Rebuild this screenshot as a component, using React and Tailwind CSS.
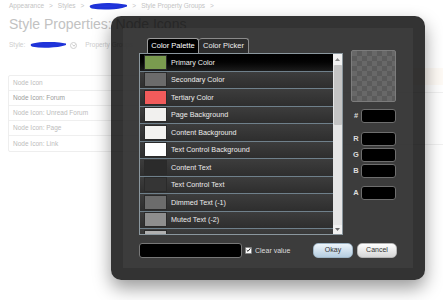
import React from "react";

function Scribble({ w = 38, h = 8 }) {
  return (
    <svg width={w} height={h} viewBox={`0 0 ${w} ${h}`} className="block">
      <path
        d={`M2 ${h / 2} C ${w * 0.25} ${h * 0.1}, ${w * 0.7} ${h * 0.1}, ${w - 2} ${h * 0.4} C ${w * 0.75} ${h * 0.8}, ${w * 0.3} ${h * 0.85}, 3 ${h * 0.6}`}
        fill="#2437e0"
        stroke="#1f33d8"
        strokeWidth="2.5"
        strokeLinecap="round"
      />
    </svg>
  );
}

const rows = [
  { name: "Primary Color", color: "#7a9b4f", active: true },
  { name: "Secondary Color", color: "#6b6b6b" },
  { name: "Tertiary Color", color: "#f25b5b" },
  { name: "Page Background", color: "#f1f0ee" },
  { name: "Content Background", color: "#f3f2f0" },
  { name: "Text Control Background", color: "#ffffff" },
  { name: "Content Text", color: "#2b2b2b" },
  { name: "Text Control Text", color: "#353535" },
  { name: "Dimmed Text (-1)", color: "#6c6c6c" },
  { name: "Muted Text (-2)", color: "#8e8e8e" },
  { name: "Faint Text (-3)", color: "#b0b0b0" },
];

const nodeRows = [
  { t: "Node Icon", c: "text-[#bcbcbc]" },
  { t: "Node Icon: Forum", c: "text-[#9c9c9c]" },
  { t: "Node Icon: Unread Forum", c: "text-[#bcbcbc]" },
  { t: "Node Icon: Page", c: "text-[#bcbcbc]" },
  { t: "Node Icon: Link", c: "text-[#bcbcbc]" },
];

function Field({ label, className = "" }) {
  return (
    <div className={`flex items-center h-[14px] ${className}`}>
      <span className="w-[10px] text-center text-[7.5px] font-bold text-[#dcdcdc] leading-none">
        {label}
      </span>
      <div className="w-[35px] h-[14px] bg-black border border-[#6e6e6e] rounded-[3px]" />
    </div>
  );
}

export default function App() {
  return (
    <div className="relative w-[443px] h-[300px] overflow-hidden bg-white font-['Liberation_Sans',Arial,sans-serif]">
      {/* Underlying page */}
      <div className="pl-[9px]">
        <div className="flex items-center gap-[5px] h-[12px] text-[6.5px] text-[#c4c4c4]">
          <span>Appearance</span>
          <span>&gt;</span>
          <span>Styles</span>
          <span>&gt;</span>
          <Scribble w={38} h={7} />
          <span>&gt;</span>
          <span>Style Property Groups</span>
          <span>&gt;</span>
        </div>
        <div className="mt-[4px] h-[16px] text-[14px] leading-[16px] text-[#c2c2c2] whitespace-nowrap">
          Style Properties: Node Icons
        </div>
        <div className="mt-[7px] flex items-center h-[12px] text-[6.5px] text-[#cdcdcd]">
          <span>Style:</span>
          <span className="ml-[5px]">
            <Scribble w={36} h={6} />
          </span>
          <span className="ml-[4px] w-[7px] h-[7px] rounded-full border border-[#cfcfcf] flex items-center justify-center">
            <svg width="4" height="3" viewBox="0 0 4 3">
              <path d="M0.5 0.5 L2 2.2 L3.5 0.5" fill="none" stroke="#bbb" strokeWidth="0.8" />
            </svg>
          </span>
          <span className="ml-[8px]">Property Groups</span>
        </div>
        <div className="mt-[17px] flex">
          <div className="pt-[7px] -ml-[1px]">
            <div className="w-[140px] border border-[#eeeeee] rounded-[2px]">
              {nodeRows.map((r, i) => (
                <div
                  key={r.t}
                  className={`h-[15px] flex items-center pl-[4px] text-[6.5px] ${r.c} ${i < nodeRows.length - 1 ? "border-b border-[#efefef]" : ""}`}
                >
                  {r.t}
                </div>
              ))}
            </div>
          </div>
          <div className="flex-1 ml-[20px]">
            <div className="h-[17px] bg-[#fefaf5]" />
            <div className="h-[8px] border-b border-[#f0f0f0]" />
            <div className="h-[52px] border-b border-[#f0f0f0]" />
          </div>
        </div>
      </div>

      {/* Modal overlay */}
      <div className="absolute left-[111px] top-[16px] w-[314px] h-[264px] rounded-[10px] bg-black/80 p-[12px] shadow-[0_8px_18px_rgba(0,0,0,0.4)]">
        <div className="h-full bg-[rgba(61,61,61,0.92)] pt-[10px] px-[16px] flex flex-col">
          <div className="flex">
            {/* left: tabs + list */}
            <div className="w-[204px] flex flex-col">
              <div className="flex h-[15px] ml-[8px] text-[7.5px] leading-none">
                <div className="w-[52px] h-[15px] bg-black border border-b-0 border-[#9a9a9a] rounded-t-[3px] flex items-center justify-center text-white">
                  Color Palette
                </div>
                <div className="w-[50px] h-[15px] bg-[#2c2c2c] border border-b-0 border-l-0 border-[#8a8a8a] rounded-t-[3px] flex items-center justify-center text-[#eeeeee]">
                  Color Picker
                </div>
              </div>
              <div className="h-[182px] border border-[#8b979e] flex overflow-hidden">
                <div className="flex-1 flex flex-col">
                  {rows.map((r) => (
                    <div
                      key={r.name}
                      className={`shrink-0 h-[17.5px] flex items-center border-b border-[#6f808b] ${
                        r.active
                          ? "bg-linear-to-b from-[#000000] to-[#1c1c1c]"
                          : "bg-linear-to-b from-[#3d3d3d] to-[#2e2e2e]"
                      }`}
                    >
                      <div
                        className="ml-[4px] w-[23px] h-[15px] border border-[#2a2a2a]"
                        style={{ backgroundColor: r.color }}
                      />
                      <span className="ml-[4px] text-[7.2px] leading-none text-[#ececec] whitespace-nowrap">
                        {r.name}
                      </span>
                    </div>
                  ))}
                </div>
                <div className="w-[9px] flex flex-col bg-[#e6e6e6]">
                  <div className="h-[11px] bg-[#f1f1f1] flex items-center justify-center">
                    <svg width="5" height="3" viewBox="0 0 5 3">
                      <path d="M0 3 L2.5 0 L5 3 Z" fill="#8a8a8a" />
                    </svg>
                  </div>
                  <div className="h-[60px] mx-[0.5px] bg-[#c4c4c4] rounded-[1px]" />
                  <div className="flex-1" />
                  <div className="h-[9px] bg-[#f1f1f1] flex items-center justify-center">
                    <svg width="5" height="3" viewBox="0 0 5 3">
                      <path d="M0 0 L2.5 3 L5 0 Z" fill="#6a6a6a" />
                    </svg>
                  </div>
                </div>
              </div>
            </div>
            {/* right column */}
            <div className="ml-[8px] w-[45px] mt-[12px] flex flex-col">
              <div className="h-[52px] w-[45px] border border-[#7c7c7c] rounded-[2px] bg-[repeating-conic-gradient(#5b5b5b_0%_25%,#686868_0%_50%)] bg-[length:10px_10px]" />
              <Field label="#" className="mt-[7px]" />
              <Field label="R" className="mt-[9px]" />
              <Field label="G" className="mt-[2px]" />
              <Field label="B" className="mt-[2px]" />
              <Field label="A" className="mt-[8px]" />
            </div>
          </div>
          {/* bottom row */}
          <div className="mt-[7px] flex items-center h-[16px]">
            <div className="w-[103px] h-[15px] bg-black border border-[#777777] rounded-[3px]" />
            <div className="ml-[3px] w-[7px] h-[7px] bg-white border border-[#888] rounded-[1px] flex items-center justify-center">
              <svg width="6" height="6" viewBox="0 0 6 6">
                <path d="M0.8 3 L2.4 4.6 L5.2 1" fill="none" stroke="#222" strokeWidth="1.2" />
              </svg>
            </div>
            <span className="ml-[3px] text-[7px] leading-none text-[#dddddd]">Clear value</span>
            <div className="ml-auto flex gap-[4px]">
              <div className="w-[40px] h-[15px] rounded-[5px] bg-linear-to-b from-[#eef5fb] to-[#b5cde0] border border-[#9fb5c6] flex items-center justify-center text-[7px] text-[#333]">
                Okay
              </div>
              <div className="w-[40px] h-[15px] rounded-[5px] bg-linear-to-b from-[#ffffff] to-[#d6d6d6] border border-[#b5b5b5] flex items-center justify-center text-[7px] text-[#333]">
                Cancel
              </div>
            </div>
          </div>
        </div>
      </div>
    </div>
  );
}
